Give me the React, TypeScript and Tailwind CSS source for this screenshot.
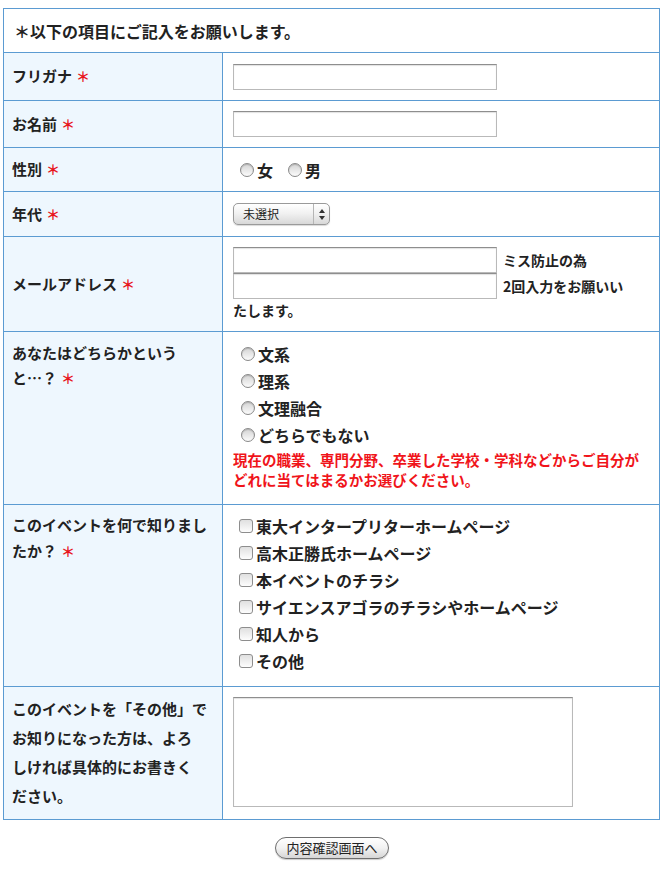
import React from 'react';

const font = { fontFamily: '"Noto Sans CJK JP", "Noto Sans", sans-serif' };

function Req() {
  return <span className="ml-[4px] text-[14px] text-[#e8141b]">＊</span>;
}

function Radio({ label }: { label: string }) {
  return (
    <label className="flex items-center">
      <span className="mr-[3px] inline-block h-[14px] w-[14px] rounded-full border border-[#8a8a8a] bg-gradient-to-b from-[#d4d4d4] to-[#fbfbfb] shadow-[inset_0_1px_1px_rgba(0,0,0,0.18)]" />
      <span>{label}</span>
    </label>
  );
}

function Check({ label }: { label: string }) {
  return (
    <label className="flex h-[27px] items-center">
      <span className="mr-[3px] inline-block h-[14px] w-[14px] rounded-[3px] border border-[#8d8d8d] bg-gradient-to-b from-[#e0e0e0] to-[#fdfdfd]" />
      <span>{label}</span>
    </label>
  );
}

function TextBox({ w = 'w-[264px]', h = 'h-[26px]' }: { w?: string; h?: string }) {
  return (
    <div className={`${w} ${h} border border-[#b9b9b9] border-t-[#8e8e8e] bg-white shadow-[inset_0_1px_1px_rgba(0,0,0,0.12)]`} />
  );
}

const th = 'border border-[#5b9bd2] bg-[#eef7fe] pl-[8px] pr-[10px] text-left align-middle font-bold';
const td = 'border border-[#5b9bd2] bg-white px-[10px] align-middle';

export default function App() {
  return (
    <div className="bg-white pb-[24px] pt-[8px] text-[15px] font-bold text-[#222]" style={font}>
      <table className="ml-[3px] w-[657px] border-collapse">
        <tbody>
          <tr className="h-[44px]">
            <td colSpan={2} className={td + ' pl-[10px] text-[16px]'}>
              ＊以下の項目にご記入をお願いします。
            </td>
          </tr>
          <tr className="h-[48px]">
            <th className={th + ' w-[219px]'}>
              フリガナ<Req />
            </th>
            <td className={td}>
              <TextBox />
            </td>
          </tr>
          <tr className="h-[47px]">
            <th className={th}>
              お名前<Req />
            </th>
            <td className={td}>
              <TextBox />
            </td>
          </tr>
          <tr className="h-[44px]">
            <th className={th}>
              性別<Req />
            </th>
            <td className={td + ' text-[16px]'}>
              <div className="ml-[7px] flex gap-[15px]">
                <Radio label="女" />
                <Radio label="男" />
              </div>
            </td>
          </tr>
          <tr className="h-[45px]">
            <th className={th}>
              年代<Req />
            </th>
            <td className={td}>
              <div className="flex h-[22px] w-[97px] items-center rounded-[5px] border border-[#9a9a9a] bg-gradient-to-b from-[#ffffff] via-[#f0f0f0] to-[#d8d8d8] text-[12px] font-normal shadow-[0_1px_1px_rgba(0,0,0,0.15)]">
                <span className="flex-1 pl-[9px]">未選択</span>
                <span className="flex h-full w-[16px] items-center justify-center border-l border-[#b5b5b5]">
                  <svg width="6" height="11" viewBox="0 0 6 11">
                    <path d="M3 0 L6 4 L0 4 Z" fill="#333" />
                    <path d="M0 7 L6 7 L3 11 Z" fill="#333" />
                  </svg>
                </span>
              </div>
            </td>
          </tr>
          <tr className="h-[95px]">
            <th className={th}>
              メールアドレス<Req />
            </th>
            <td className={td + ' pb-[10px] pt-[10px] align-top text-[14px]'}>
              <div className="flex items-center gap-[6px]">
                <TextBox h="h-[26px]" />
                <span>ミス防止の為</span>
              </div>
              <div className="flex items-center gap-[6px]">
                <TextBox h="h-[26px]" />
                <span>2回入力をお願いい</span>
              </div>
              <div className="mt-[1px] leading-[20px]">たします。</div>
            </td>
          </tr>
          <tr className="h-[173px]">
            <th className={th + ' pt-[8px] align-top leading-[25px]'}>
              あなたはどちらかという
              <br />
              と…？<Req />
            </th>
            <td className={td + ' pt-[8px] align-top'}>
              <div className="ml-[8px] flex flex-col text-[16px]">
                {['文系', '理系', '文理融合', 'どちらでもない'].map((s) => (
                  <div key={s} className="flex h-[27px] items-center">
                    <Radio label={s} />
                  </div>
                ))}
              </div>
              <p className="mt-[2px] text-[14.5px] leading-[20px] text-[#f0141a]">
                現在の職業、専門分野、卒業した学校・学科などからご自分が
                <br />
                どれに当てはまるかお選びください。
              </p>
            </td>
          </tr>
          <tr className="h-[182px]">
            <th className={th + ' pt-[7px] align-top leading-[26px]'}>
              このイベントを何で知りまし
              <br />
              たか？<Req />
            </th>
            <td className={td + ' pt-[7px] align-top text-[16px]'}>
              <div className="ml-[6px] flex flex-col">
                <Check label="東大インタープリターホームページ" />
                <Check label="高木正勝氏ホームページ" />
                <Check label="本イベントのチラシ" />
                <Check label="サイエンスアゴラのチラシやホームページ" />
                <Check label="知人から" />
                <Check label="その他" />
              </div>
            </td>
          </tr>
          <tr className="h-[133px]">
            <th className={th + ' pt-[7px] align-top text-[15px] leading-[29px]'}>
              このイベントを「その他」で
              <br />
              お知りになった方は、よろ
              <br />
              しければ具体的にお書きく
              <br />
              ださい。
            </th>
            <td className={td + ' pt-[10px] align-top'}>
              <TextBox w="w-[340px]" h="h-[110px]" />
            </td>
          </tr>
        </tbody>
      </table>
      <div className="mt-[17px] flex justify-center">
        <button className="flex h-[22px] items-center rounded-full border border-[#6e6e6e] bg-gradient-to-b from-[#ffffff] via-[#f2f2f2] to-[#d6d6d6] px-[10px] text-[13px] font-normal text-[#222] shadow-[0_1px_1px_rgba(0,0,0,0.2)]">
          内容確認画面へ
        </button>
      </div>
    </div>
  );
}
